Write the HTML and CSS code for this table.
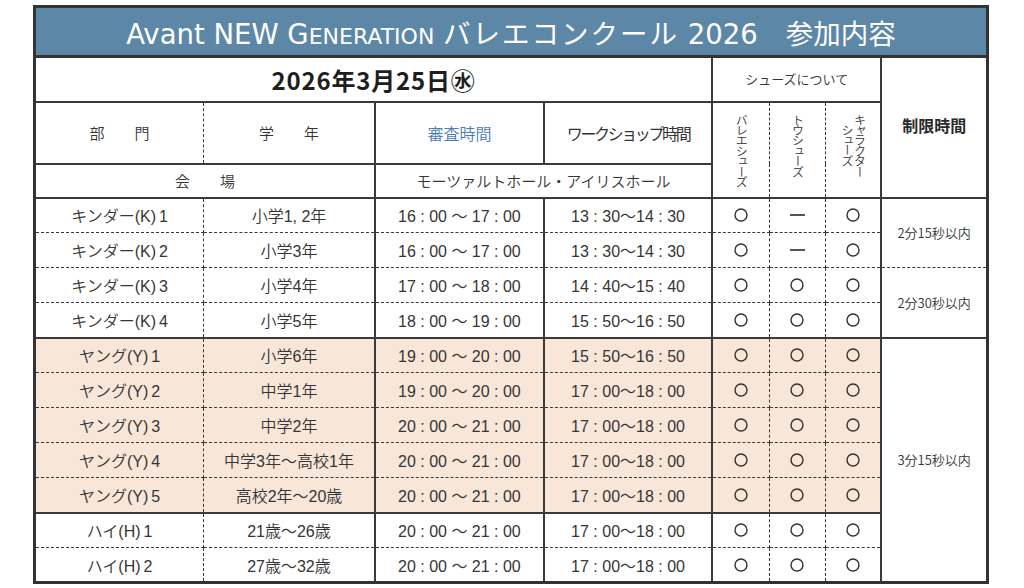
FILE: index.html
```html
<!DOCTYPE html>
<html lang="ja">
<head>
<meta charset="utf-8">
<title>Avant NEW GENERATION バレエコンクール 2026 参加内容</title>
<link rel="stylesheet" href="styles.css">
</head>
<body>
<div class="page">
<table class="sched">
  <colgroup>
    <col class="w1"><col class="w2"><col class="w3"><col class="w4">
    <col class="w5"><col class="w6"><col class="w7"><col class="w8">
  </colgroup>
  <tr class="r-title">
    <th colspan="8" class="title">Avant NEW G<span class="sc">ENERATION</span> <span class="kana">バレエコンクール</span> 2026<span class="gap"></span>参加内容</th>
  </tr>
  <tr class="r-date">
    <td colspan="4" class="date">2026年3月25日㊌</td>
    <td colspan="3" class="shoes">シューズについて</td>
    <td rowspan="3" class="limit-h">制限時間</td>
  </tr>
  <tr class="r-head">
    <td class="c1 hd">部　　門</td>
    <td class="c2 hd">学　　年</td>
    <td class="hd blue">審査時間</td>
    <td class="hd ws">ワークショップ時間</td>
    <td rowspan="2" class="c5 vcell"><div class="vt">バレエシューズ</div></td>
    <td rowspan="2" class="c6 vcell"><div class="vt">トウシューズ</div></td>
    <td rowspan="2" class="c7 vcell"><div class="vt">キャラクター<br>シューズ</div></td>
  </tr>
  <tr class="r-venue">
    <td colspan="2" class="hd">会　　場</td>
    <td colspan="2" class="venue">モーツァルトホール・アイリスホール</td>
  </tr>

  <tr class="d grp">
    <td class="c1">キンダー(K)<span class="n">1</span></td>
    <td class="c2">小学1, 2年</td>
    <td class="t">16 : 00 ～ 17 : 00</td>
    <td class="t">13 : 30～14 : 30</td>
    <td class="c5 m"><svg class="ok" viewBox="0 0 14 14"><circle cx="7" cy="7" r="6"/></svg></td><td class="c6 m"><span class="ng"></span></td><td class="c7 m"><svg class="ok" viewBox="0 0 14 14"><circle cx="7" cy="7" r="6"/></svg></td>
    <td rowspan="2" class="lim lim1">2分15秒以内</td>
  </tr>
  <tr class="d">
    <td class="c1">キンダー(K)<span class="n">2</span></td>
    <td class="c2">小学3年</td>
    <td class="t">16 : 00 ～ 17 : 00</td>
    <td class="t">13 : 30～14 : 30</td>
    <td class="c5 m"><svg class="ok" viewBox="0 0 14 14"><circle cx="7" cy="7" r="6"/></svg></td><td class="c6 m"><span class="ng"></span></td><td class="c7 m"><svg class="ok" viewBox="0 0 14 14"><circle cx="7" cy="7" r="6"/></svg></td>
  </tr>
  <tr class="d">
    <td class="c1">キンダー(K)<span class="n">3</span></td>
    <td class="c2">小学4年</td>
    <td class="t">17 : 00 ～ 18 : 00</td>
    <td class="t">14 : 40～15 : 40</td>
    <td class="c5 m"><svg class="ok" viewBox="0 0 14 14"><circle cx="7" cy="7" r="6"/></svg></td><td class="c6 m"><svg class="ok" viewBox="0 0 14 14"><circle cx="7" cy="7" r="6"/></svg></td><td class="c7 m"><svg class="ok" viewBox="0 0 14 14"><circle cx="7" cy="7" r="6"/></svg></td>
    <td rowspan="2" class="lim lim2">2分30秒以内</td>
  </tr>
  <tr class="d">
    <td class="c1">キンダー(K)<span class="n">4</span></td>
    <td class="c2">小学5年</td>
    <td class="t">18 : 00 ～ 19 : 00</td>
    <td class="t">15 : 50～16 : 50</td>
    <td class="c5 m"><svg class="ok" viewBox="0 0 14 14"><circle cx="7" cy="7" r="6"/></svg></td><td class="c6 m"><svg class="ok" viewBox="0 0 14 14"><circle cx="7" cy="7" r="6"/></svg></td><td class="c7 m"><svg class="ok" viewBox="0 0 14 14"><circle cx="7" cy="7" r="6"/></svg></td>
  </tr>

  <tr class="d y grp">
    <td class="c1">ヤング(Y)<span class="n">1</span></td>
    <td class="c2">小学6年</td>
    <td class="t">19 : 00 ～ 20 : 00</td>
    <td class="t">15 : 50～16 : 50</td>
    <td class="c5 m"><svg class="ok" viewBox="0 0 14 14"><circle cx="7" cy="7" r="6"/></svg></td><td class="c6 m"><svg class="ok" viewBox="0 0 14 14"><circle cx="7" cy="7" r="6"/></svg></td><td class="c7 m"><svg class="ok" viewBox="0 0 14 14"><circle cx="7" cy="7" r="6"/></svg></td>
    <td rowspan="7" class="lim lim3">3分15秒以内</td>
  </tr>
  <tr class="d y">
    <td class="c1">ヤング(Y)<span class="n">2</span></td>
    <td class="c2">中学1年</td>
    <td class="t">19 : 00 ～ 20 : 00</td>
    <td class="t">17 : 00～18 : 00</td>
    <td class="c5 m"><svg class="ok" viewBox="0 0 14 14"><circle cx="7" cy="7" r="6"/></svg></td><td class="c6 m"><svg class="ok" viewBox="0 0 14 14"><circle cx="7" cy="7" r="6"/></svg></td><td class="c7 m"><svg class="ok" viewBox="0 0 14 14"><circle cx="7" cy="7" r="6"/></svg></td>
  </tr>
  <tr class="d y">
    <td class="c1">ヤング(Y)<span class="n">3</span></td>
    <td class="c2">中学2年</td>
    <td class="t">20 : 00 ～ 21 : 00</td>
    <td class="t">17 : 00～18 : 00</td>
    <td class="c5 m"><svg class="ok" viewBox="0 0 14 14"><circle cx="7" cy="7" r="6"/></svg></td><td class="c6 m"><svg class="ok" viewBox="0 0 14 14"><circle cx="7" cy="7" r="6"/></svg></td><td class="c7 m"><svg class="ok" viewBox="0 0 14 14"><circle cx="7" cy="7" r="6"/></svg></td>
  </tr>
  <tr class="d y">
    <td class="c1">ヤング(Y)<span class="n">4</span></td>
    <td class="c2">中学3年～高校1年</td>
    <td class="t">20 : 00 ～ 21 : 00</td>
    <td class="t">17 : 00～18 : 00</td>
    <td class="c5 m"><svg class="ok" viewBox="0 0 14 14"><circle cx="7" cy="7" r="6"/></svg></td><td class="c6 m"><svg class="ok" viewBox="0 0 14 14"><circle cx="7" cy="7" r="6"/></svg></td><td class="c7 m"><svg class="ok" viewBox="0 0 14 14"><circle cx="7" cy="7" r="6"/></svg></td>
  </tr>
  <tr class="d y">
    <td class="c1">ヤング(Y)<span class="n">5</span></td>
    <td class="c2">高校2年～20歳</td>
    <td class="t">20 : 00 ～ 21 : 00</td>
    <td class="t">17 : 00～18 : 00</td>
    <td class="c5 m"><svg class="ok" viewBox="0 0 14 14"><circle cx="7" cy="7" r="6"/></svg></td><td class="c6 m"><svg class="ok" viewBox="0 0 14 14"><circle cx="7" cy="7" r="6"/></svg></td><td class="c7 m"><svg class="ok" viewBox="0 0 14 14"><circle cx="7" cy="7" r="6"/></svg></td>
  </tr>

  <tr class="d grp">
    <td class="c1">ハイ(H)<span class="n">1</span></td>
    <td class="c2">21歳～26歳</td>
    <td class="t">20 : 00 ～ 21 : 00</td>
    <td class="t">17 : 00～18 : 00</td>
    <td class="c5 m"><svg class="ok" viewBox="0 0 14 14"><circle cx="7" cy="7" r="6"/></svg></td><td class="c6 m"><svg class="ok" viewBox="0 0 14 14"><circle cx="7" cy="7" r="6"/></svg></td><td class="c7 m"><svg class="ok" viewBox="0 0 14 14"><circle cx="7" cy="7" r="6"/></svg></td>
  </tr>
  <tr class="d last">
    <td class="c1">ハイ(H)<span class="n">2</span></td>
    <td class="c2">27歳～32歳</td>
    <td class="t">20 : 00 ～ 21 : 00</td>
    <td class="t">17 : 00～18 : 00</td>
    <td class="c5 m"><svg class="ok" viewBox="0 0 14 14"><circle cx="7" cy="7" r="6"/></svg></td><td class="c6 m"><svg class="ok" viewBox="0 0 14 14"><circle cx="7" cy="7" r="6"/></svg></td><td class="c7 m"><svg class="ok" viewBox="0 0 14 14"><circle cx="7" cy="7" r="6"/></svg></td>
  </tr>
</table>
</div>
</body>
</html>
```

FILE: styles.css
```css
html, body {
  margin: 0;
  padding: 0;
  background: #ffffff;
}

.page {
  padding: 5px 0 0 33px;
}

.sched {
  width: 956px;
  table-layout: fixed;
  border-collapse: collapse;
  border: 3px solid #333;
  font-family: "Liberation Sans", "Noto Sans CJK JP", sans-serif;
  font-size: 16px;
  font-weight: 350;
  color: #353535;
}

.w1 { width: 169px; }
.w2 { width: 171px; }
.w3 { width: 169px; }
.w4 { width: 168px; }
.w5 { width: 57px; }
.w6 { width: 56px; }
.w7 { width: 56px; }
.w8 { width: 106px; }

.sched td,
.sched th {
  border: 2px solid #3a3a3a;
  padding: 0;
  text-align: center;
  vertical-align: middle;
  white-space: nowrap;
}

/* title */
.r-title { height: 50px; }
.title {
  background: #5d87a7;
  color: #ffffff;
  font-family: "DejaVu Sans", "Noto Sans CJK JP", sans-serif;
  font-weight: 400;
  font-size: 27.5px;
  border-bottom: 3px solid #333 !important;
}
.title .sc { font-size: 0.8em; }
.title .kana {
  font-family: "Noto Sans CJK JP", sans-serif;
  letter-spacing: 2px;
}
.title .gap { display: inline-block; width: 28px; }

/* date row */
.r-date { height: 45px; }
.date {
  font-family: "Noto Sans CJK JP", sans-serif;
  font-weight: 700;
  font-size: 24px;
  letter-spacing: 0.8px;
  color: #1e1e1e;
}
.shoes {
  font-family: "Noto Sans CJK JP", sans-serif;
  font-size: 13px;
  padding-bottom: 2px !important;
}
.limit-h {
  font-family: "Noto Sans CJK JP", sans-serif;
  font-weight: 700;
  font-size: 16px;
  color: #2a2a2a;
  padding-bottom: 4px !important;
}

/* header rows */
.r-head { height: 62px; }
.r-venue { height: 34px; }
.hd {
  font-family: "Noto Sans CJK JP", sans-serif;
  font-size: 15px;
}
.blue {
  color: #4a7cb8;
  font-size: 16px;
}
.ws {
  font-size: 16px;
  font-weight: 400;
  letter-spacing: -2.4px;
}
.venue {
  font-family: "Noto Sans CJK JP", sans-serif;
  font-size: 15px;
}

.vcell {
  vertical-align: top !important;
  padding-top: 11px !important;
}
.vt {
  display: inline-block;
  writing-mode: vertical-rl;
  text-orientation: mixed;
  font-family: "Noto Sans CJK JP", sans-serif;
  font-size: 12px;
  line-height: 1.05;
  letter-spacing: -1.6px;
}

/* data rows */
.d { height: 35px; }
.d td {
  border-top: 1px dashed #3a3a3a;
  border-bottom: 1px dashed #3a3a3a;
}
.d.grp td { border-top: 2px solid #3a3a3a; }
.d.last td { border-bottom: 3px solid #333; }
.d.y td { background: #f8e6d9; }
.d.y td.lim { background: #ffffff; }

.c1 { border-right: 1px dashed #3a3a3a !important; }
.c2 { border-left: 1px dashed #3a3a3a !important; }
.c5 { border-right: 1px dashed #3a3a3a !important; }
.c6 { border-left: 1px dashed #3a3a3a !important; border-right: 1px dashed #3a3a3a !important; }
.c7 { border-left: 1px dashed #3a3a3a !important; }

.d .n { margin-left: 3px; }

.m { line-height: 0; }
.ok {
  width: 14px;
  height: 14px;
  vertical-align: middle;
  fill: none;
  stroke: #333;
  stroke-width: 1.4;
}
.ng {
  display: inline-block;
  width: 15px;
  height: 2px;
  background: #555;
  vertical-align: middle;
}

.lim {
  font-family: "Noto Sans CJK JP", sans-serif;
  font-size: 13px;
  color: #333;
  background: #ffffff;
}
.d td.lim1 { border-bottom: 1px dashed #3a3a3a; }
.d td.lim2 { border-top: 1px dashed #3a3a3a; border-bottom: 2px solid #3a3a3a; }
.d td.lim3 { border-top: 2px solid #3a3a3a; border-bottom: 3px solid #333; }
```
